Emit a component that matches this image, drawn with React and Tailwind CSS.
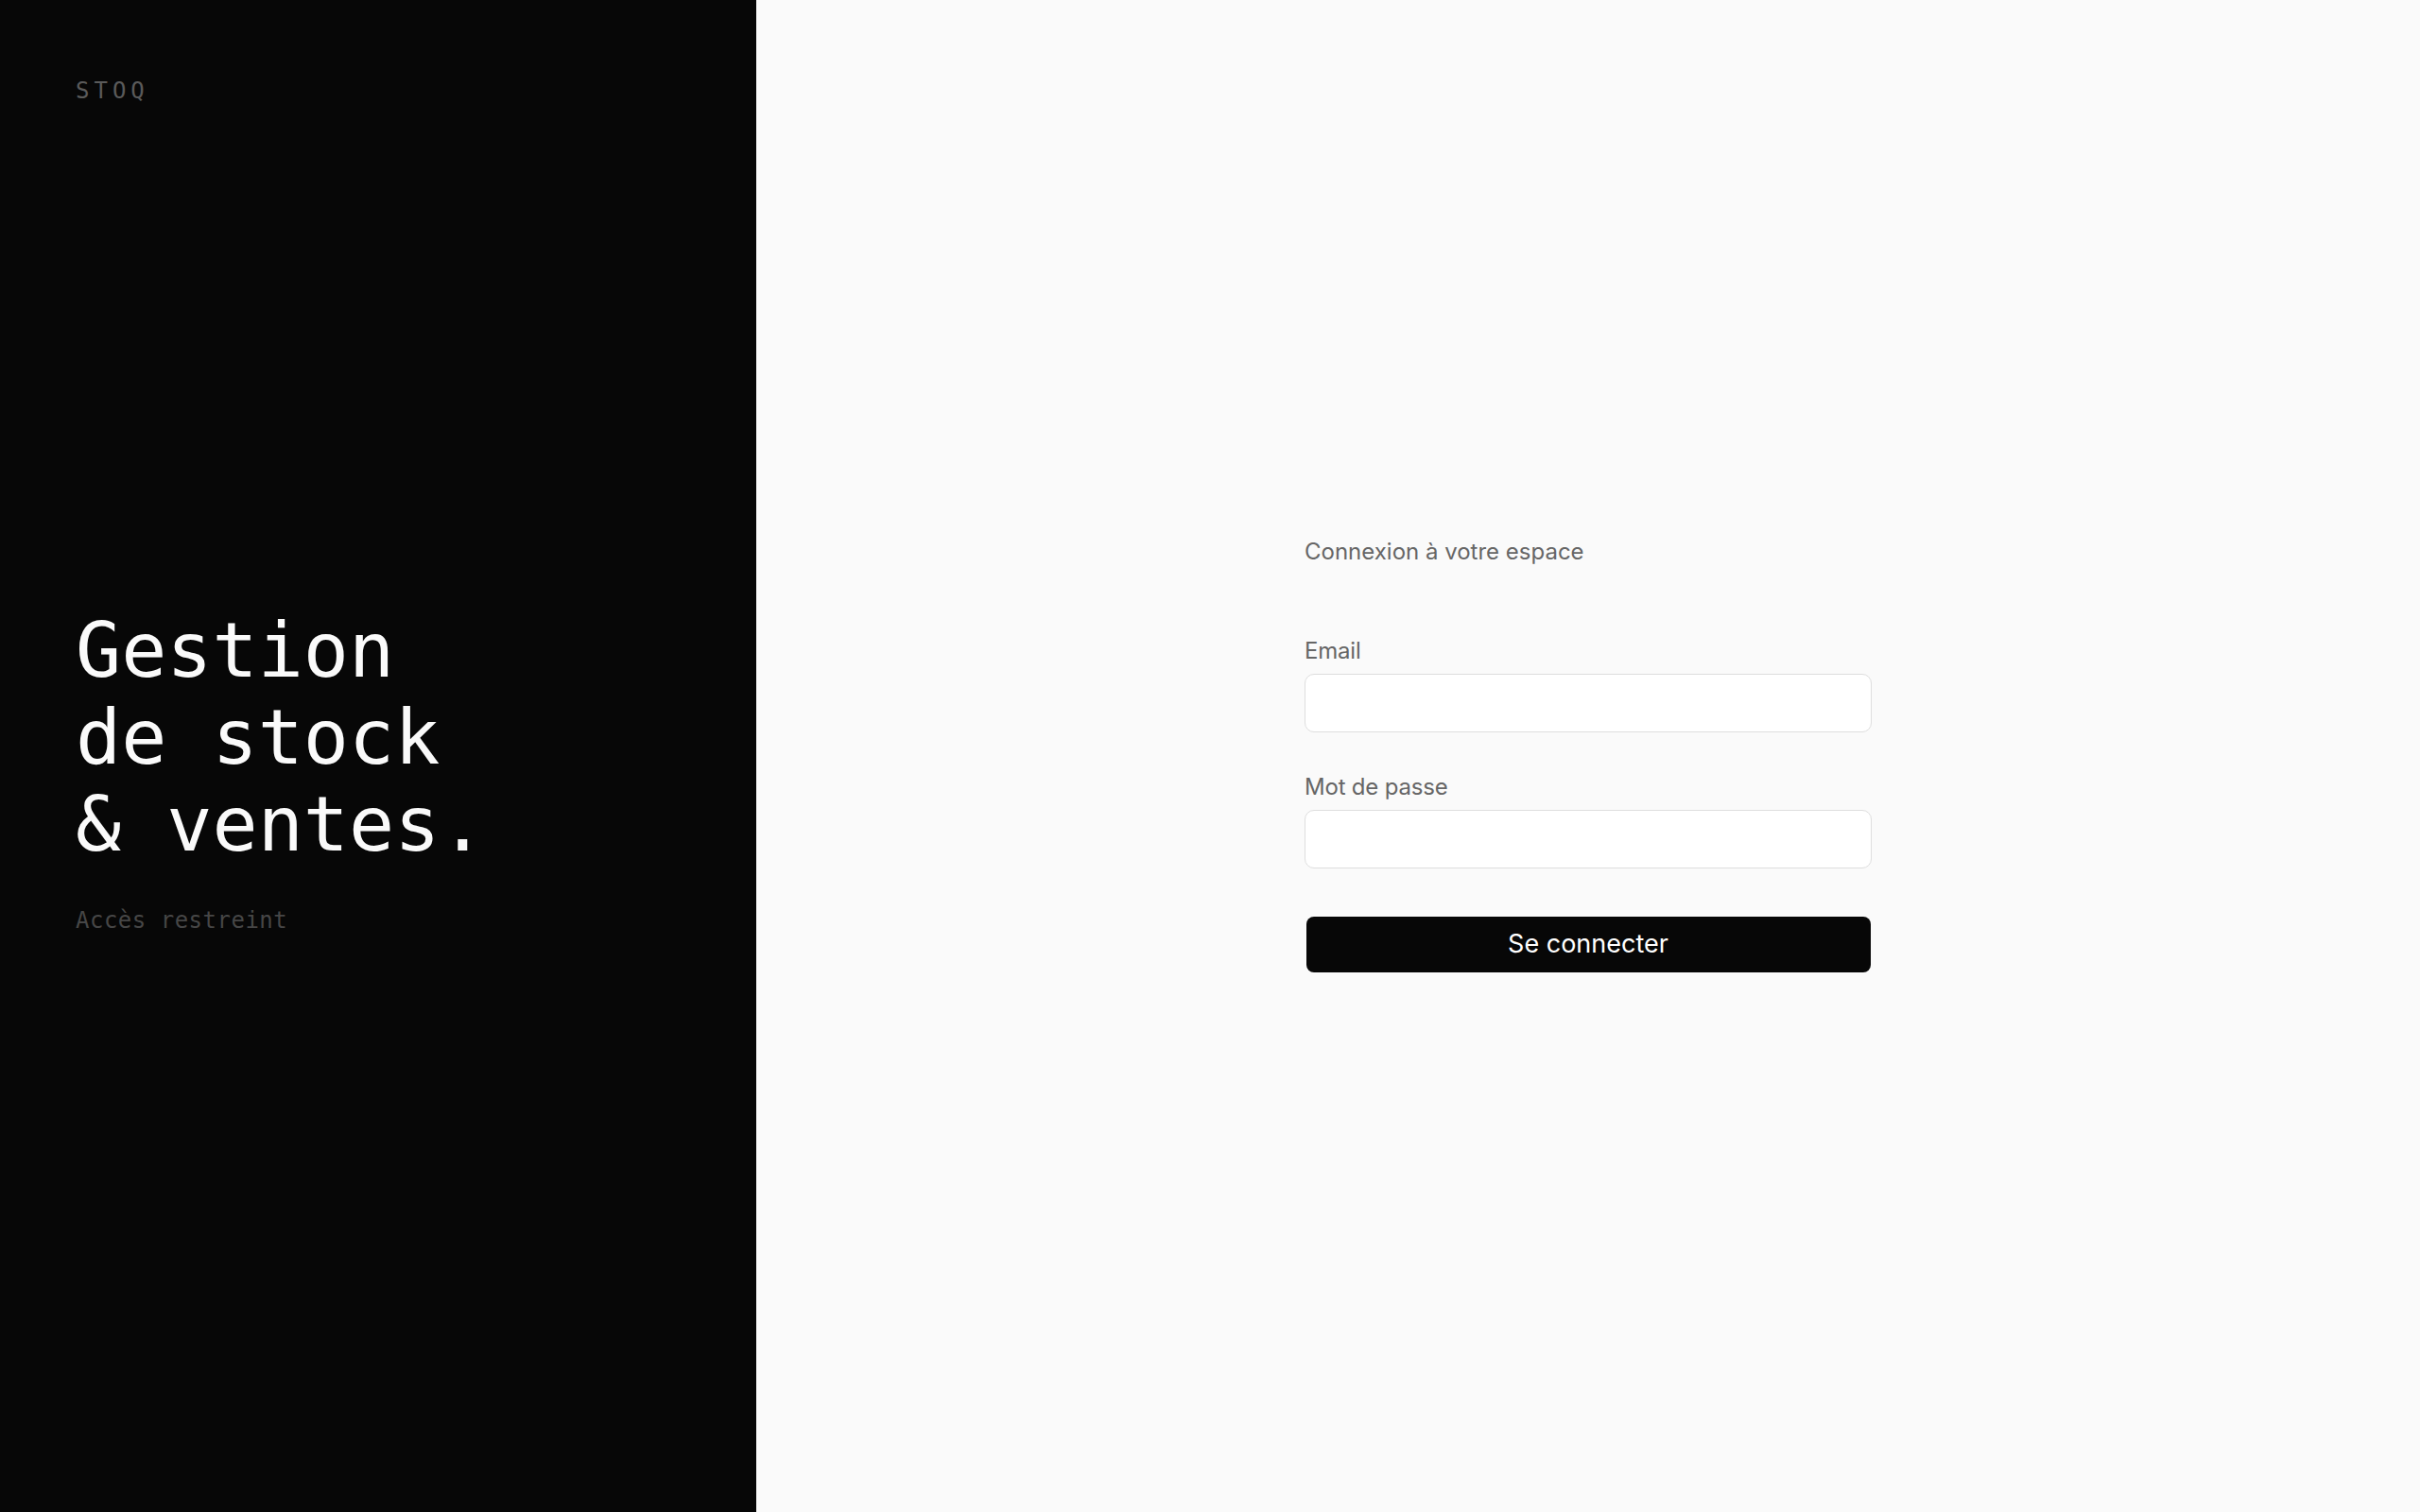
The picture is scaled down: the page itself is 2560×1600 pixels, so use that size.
import { useState } from "react";

const mono = "font-['DejaVu_Sans_Mono','Liberation_Mono',monospace]";
const sans = "font-['Inter','Noto_Sans',sans-serif]";

function Field({ id, label, type, value, onChange, className = "" }) {
  return (
    <div className={`flex flex-col ${className}`}>
      <label htmlFor={id} className="mb-2 text-[24px] leading-[32px] tracking-[-0.2px] text-[#666666]">
        {label}
      </label>
      <input
        id={id}
        type={type}
        value={value}
        onChange={(e) => onChange(e.target.value)}
        className="h-[62px] w-full rounded-[10px] border border-[#dedede] bg-white px-5 text-[24px] text-[#111] outline-none focus:border-[#bdbdbd]"
      />
    </div>
  );
}

export default function App() {
  const [email, setEmail] = useState("");
  const [password, setPassword] = useState("");

  const handleSubmit = (e) => {
    e.preventDefault();
  };

  return (
    <div className={`flex h-screen w-full ${sans}`}>
      <aside className={`flex h-full w-[800px] shrink-0 flex-col bg-[#070707] p-[80px] ${mono}`}>
        <div className="text-[24px] leading-[32px] tracking-[5px] text-[#5a5a5a]">STOQ</div>
        <div className="flex flex-1 flex-col justify-center">
          <h1 className="text-[80px] leading-[92px] font-normal text-[#fafafa]">
            Gestion
            <br />
            de stock
            <br />
            &amp; ventes.
          </h1>
          <p className="mt-[39px] text-[24px] leading-[32px] tracking-[0.5px] text-[#464646]">
            Accès restreint
          </p>
        </div>
      </aside>

      <main className="flex flex-1 items-center justify-center bg-[#fafafa]">
        <form onSubmit={handleSubmit} className="flex w-[600px] flex-col pb-[4px]">
          <p className="mb-[73px] text-[24px] leading-[32px] text-[#666666]">
            Connexion à votre espace
          </p>
          <Field id="email" label="Email" type="email" value={email} onChange={setEmail} />
          <Field
            id="password"
            label="Mot de passe"
            type="password"
            value={password}
            onChange={setPassword}
            className="mt-[42px]"
          />
          <button
            type="submit"
            className="mx-[1.5px] mt-[51px] h-[59px] rounded-[8px] bg-[#070707] text-[27px] text-white"
          >
            Se connecter
          </button>
        </form>
      </main>
    </div>
  );
}
